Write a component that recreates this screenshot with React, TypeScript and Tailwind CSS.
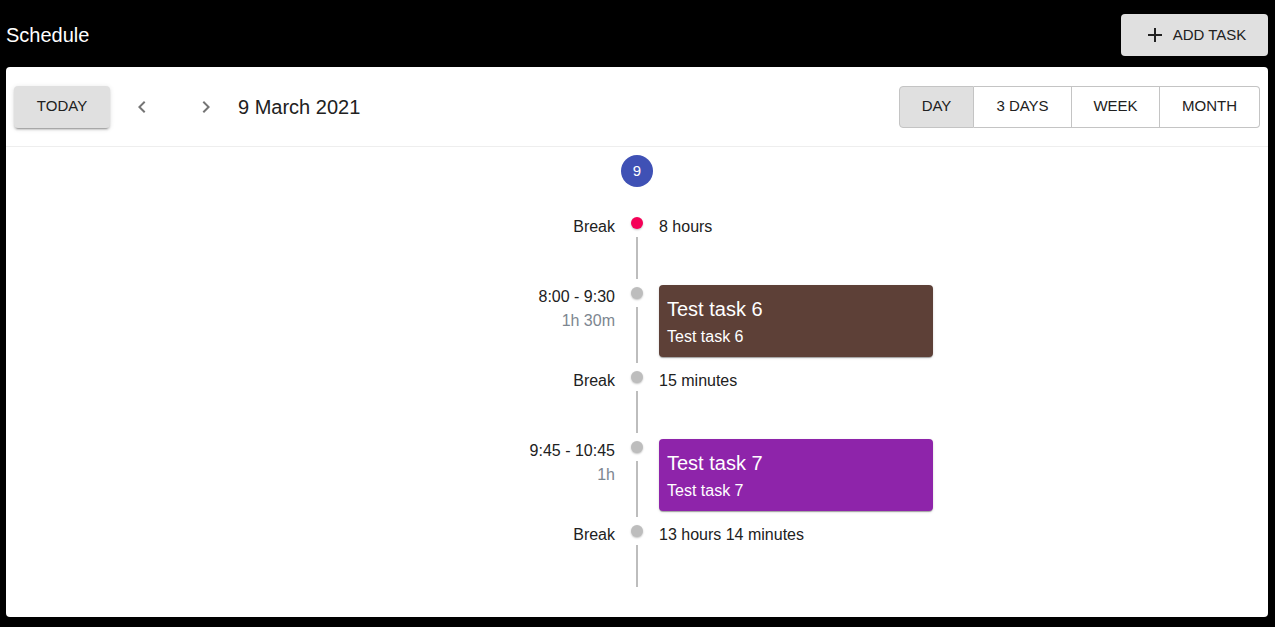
import React from "react";

type Entry =
  | { kind: "break"; label: string; dot: string }
  | { kind: "task"; time: string; duration: string; title: string; subtitle: string; color: string };

const entries: Entry[] = [
  { kind: "break", label: "8 hours", dot: "bg-[#f50057]" },
  { kind: "task", time: "8:00 - 9:30", duration: "1h 30m", title: "Test task 6", subtitle: "Test task 6", color: "bg-[#5d4037]" },
  { kind: "break", label: "15 minutes", dot: "bg-[#bdbdbd]" },
  { kind: "task", time: "9:45 - 10:45", duration: "1h", title: "Test task 7", subtitle: "Test task 7", color: "bg-[#8e24aa]" },
  { kind: "break", label: "13 hours 14 minutes", dot: "bg-[#bdbdbd]" },
];

const ChevronLeft = () => (
  <svg viewBox="0 0 24 24" className="w-6 h-6 fill-[#757575]">
    <path d="M15.41 7.41L14 6l-6 6 6 6 1.41-1.41L10.83 12z" />
  </svg>
);

const ChevronRight = () => (
  <svg viewBox="0 0 24 24" className="w-6 h-6 fill-[#757575]">
    <path d="M10 6L8.59 7.41 13.17 12l-4.58 4.59L10 18l6-6z" />
  </svg>
);

const PlusIcon = () => (
  <svg viewBox="0 0 24 24" className="w-6 h-6 fill-[#212121]">
    <path d="M19 13h-6v6h-2v-6H5v-2h6V5h2v6h6v2z" />
  </svg>
);

const TimelineRow = ({ entry }: { entry: Entry }) => {
  const dot = entry.kind === "break" ? entry.dot : "bg-[#bdbdbd]";

  return (
    <div className="flex min-h-[70px]">
      {/* opposite side */}
      <div className="flex-1 px-4 py-1.5 text-right text-[16px] leading-6">
        {entry.kind === "break" ? (
          <div className="text-[#212121]">Break</div>
        ) : (
          <>
            <div className="text-[#212121]">{entry.time}</div>
            <div className="text-[#7d8690]">{entry.duration}</div>
          </>
        )}
      </div>

      {/* separator */}
      <div className="flex flex-col items-center w-3">
        <div className={`w-3 h-3 rounded-full my-2 shadow-[0_1px_2px_rgba(0,0,0,0.25)] ${dot}`} />
        <div className="w-[2px] flex-1 bg-[#bdbdbd]" />
      </div>

      {/* content */}
      <div className="flex-1 px-4 py-1.5 text-[16px] leading-6">
        {entry.kind === "break" ? (
          <div className="text-[#212121]">{entry.label}</div>
        ) : (
          <div className={`w-[274px] rounded p-2 text-white shadow-[0_2px_1px_-1px_rgba(0,0,0,0.2),0_1px_1px_0_rgba(0,0,0,0.14),0_1px_3px_0_rgba(0,0,0,0.12)] ${entry.color}`}>
            <div className="text-[20px] leading-8">{entry.title}</div>
            <div className="text-[16px] leading-6">{entry.subtitle}</div>
          </div>
        )}
      </div>
    </div>
  );
};

const App = () => {
  return (
    <div className="min-h-screen bg-black pl-[6px] pr-[7px] pt-[14px] font-['Liberation_Sans',Arial,sans-serif]">
      {/* header */}
      <div className="flex items-center justify-between h-[42px]">
        <h1 className="text-white text-[20px] leading-8">Schedule</h1>
        <button className="flex items-center justify-center w-[147px] h-[42px] rounded bg-[#e0e0e0] text-[15px] text-[#212121]">
          <span className="mr-[6px]">
            <PlusIcon />
          </span>
          ADD TASK
        </button>
      </div>

      {/* panel */}
      <div className="mt-[11px] h-[550px] bg-white rounded flex flex-col">
        {/* toolbar */}
        <div className="flex items-center justify-between h-[80px] px-2 border-b border-[#eeeeee]">
          <div className="flex items-center">
            <button className="w-[96px] h-[42px] rounded bg-[#e0e0e0] text-[15px] text-[#212121] shadow-[0_3px_1px_-2px_rgba(0,0,0,0.2),0_2px_2px_0_rgba(0,0,0,0.14),0_1px_5px_0_rgba(0,0,0,0.12)]">
              TODAY
            </button>
            <button className="ml-2 w-12 h-12 flex items-center justify-center rounded-full">
              <ChevronLeft />
            </button>
            <button className="ml-4 w-12 h-12 flex items-center justify-center rounded-full">
              <ChevronRight />
            </button>
            <span className="ml-2 text-[20px] text-[#212121]">9 March 2021</span>
          </div>

          <div className="flex h-[42px] text-[15px] text-[#212121]">
            <button className="w-[75px] rounded-l border border-[#c4c4c4] bg-[#e0e0e0]">DAY</button>
            <button className="w-[98px] border-y border-r border-[#c4c4c4]">3 DAYS</button>
            <button className="w-[88px] border-y border-r border-[#c4c4c4]">WEEK</button>
            <button className="w-[100px] rounded-r border-y border-r border-[#c4c4c4]">MONTH</button>
          </div>
        </div>

        {/* day marker */}
        <div className="flex justify-center mt-2">
          <div className="w-8 h-8 rounded-full bg-[#3f51b5] text-white text-[15px] flex items-center justify-center">
            9
          </div>
        </div>

        {/* timeline */}
        <div className="pt-[22px]">
          {entries.map((e, i) => (
            <TimelineRow key={i} entry={e} />
          ))}
        </div>
      </div>
    </div>
  );
};

export default App;
